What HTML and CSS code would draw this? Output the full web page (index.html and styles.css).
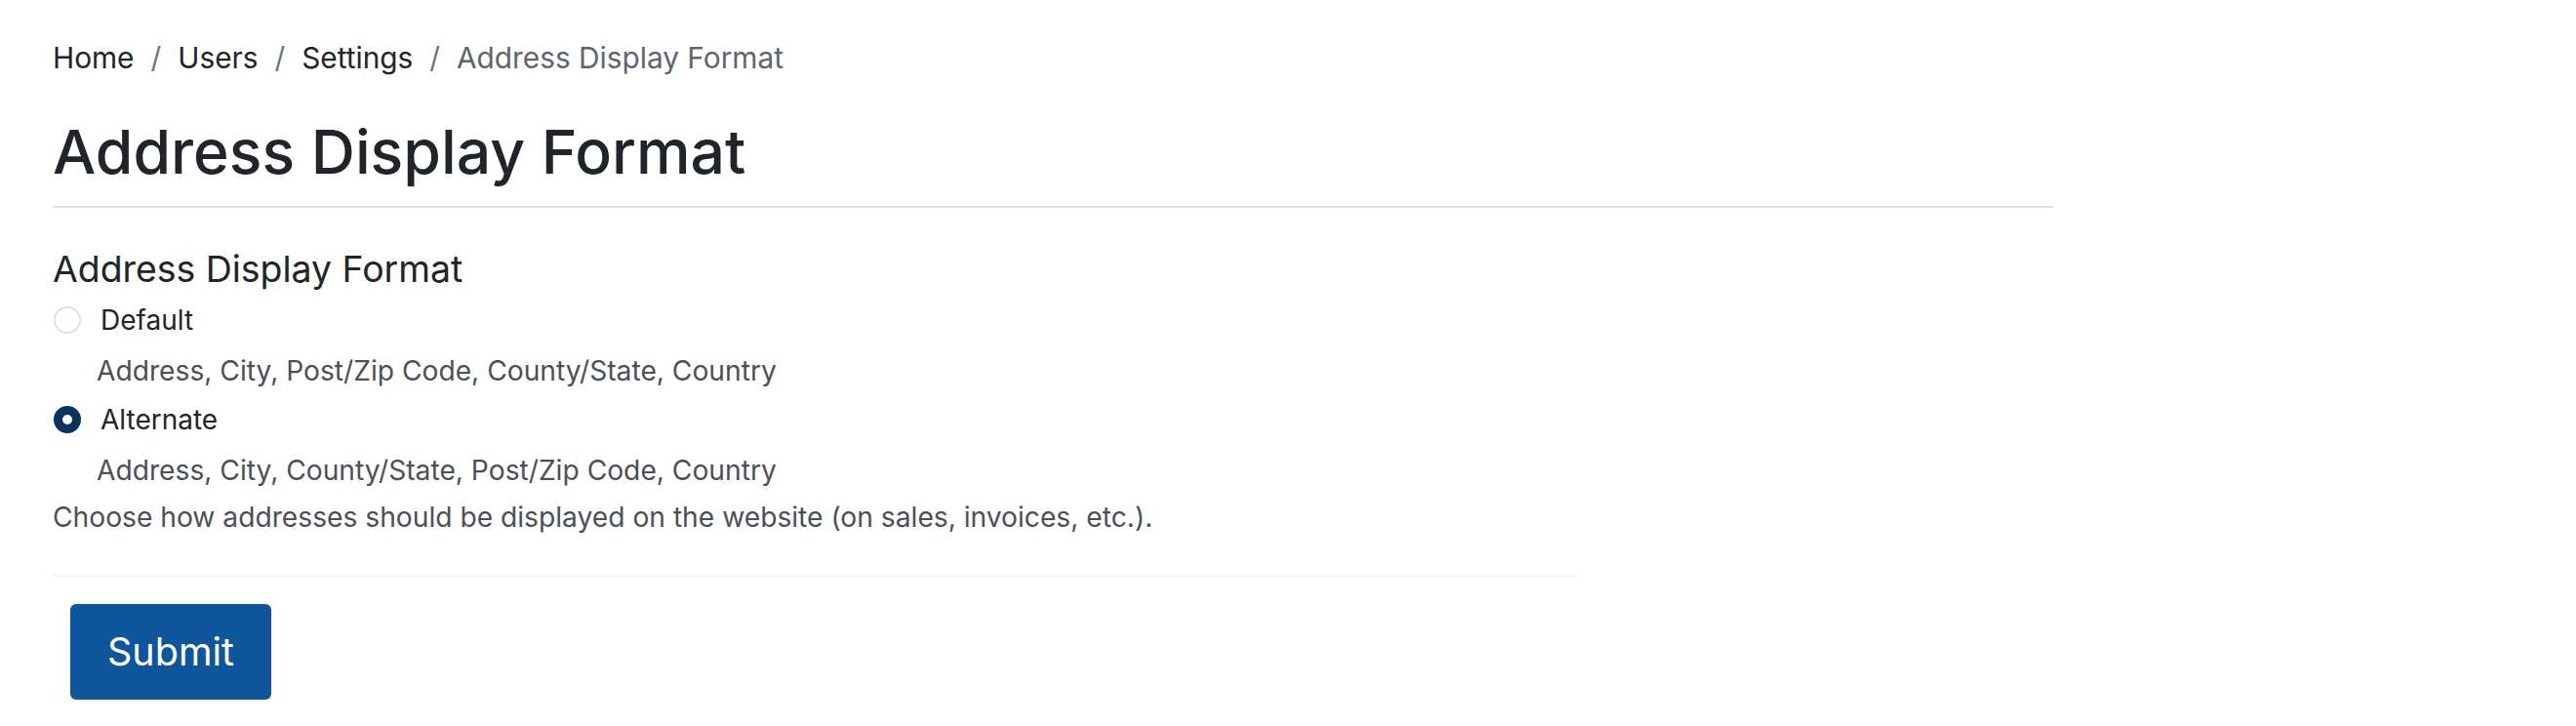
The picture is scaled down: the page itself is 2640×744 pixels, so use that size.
FILE: index.html
```html
<!DOCTYPE html>
<html lang="en">
<head>
<meta charset="utf-8">
<title>Address Display Format</title>
<link rel="stylesheet" href="styles.css">
</head>
<body>
<main class="page">
  <nav class="breadcrumb">
    <a class="crumb" href="#">Home</a><span class="sep">/</span>
    <a class="crumb" href="#">Users</a><span class="sep">/</span>
    <a class="crumb" href="#">Settings</a><span class="sep">/</span>
    <span class="crumb current">Address Display Format</span>
  </nav>
  <h1 class="title">Address Display Format</h1>
  <form class="form">
    <fieldset class="field">
      <legend class="field-label">Address Display Format</legend>
      <label class="option">
        <input class="radio" type="radio" name="fmt" value="default">
        <span class="option-text">Default</span>
      </label>
      <div class="option-desc">Address, City, Post/Zip Code, County/State, Country</div>
      <label class="option">
        <input class="radio" type="radio" name="fmt" value="alternate" checked>
        <span class="option-text">Alternate</span>
      </label>
      <div class="option-desc last">Address, City, County/State, Post/Zip Code, Country</div>
      <div class="help">Choose how addresses should be displayed on the website (on sales, invoices, etc.).</div>
    </fieldset>
    <div class="actions">
      <button class="btn" type="button">Submit</button>
    </div>
  </form>
</main>
</body>
</html>
```
FILE: styles.css
```css
html, body {
  margin: 0;
  padding: 0;
  background: #ffffff;
}
body {
  font-family: Inter, "Noto Sans", "Liberation Sans", sans-serif;
  color: #212529;
}
.page {
  width: 2050px;
  padding: 37px 54px 0 54px;
}
.breadcrumb {
  display: flex;
  align-items: center;
  font-size: 29.8px;
  line-height: 44px;
}
.crumb {
  color: #212529;
  text-decoration: none;
}
.crumb.current {
  color: #5f656d;
}
.sep {
  color: #6c757d;
  padding: 0 17px;
}
.title {
  margin: 36px 0 0 0;
  font-size: 62.5px;
  font-weight: 500;
  line-height: 77px;
  padding-bottom: 17px;
  border-bottom: 2px solid #dee2e6;
}
.form {
  width: 1563px;
}
.field {
  margin: 36px 0 0 0;
  padding: 0;
  border: 0;
}
.field-label {
  padding: 0;
  font-size: 37.4px;
  line-height: 54px;
  margin-bottom: 4px;
}
.option {
  display: flex;
  align-items: center;
  gap: 20px;
  font-size: 28px;
  line-height: 42px;
  color: #212529;
}
.radio {
  appearance: none;
  -webkit-appearance: none;
  margin: 0 0 0 1px;
  width: 28px;
  height: 28px;
  border-radius: 50%;
  border: 2px solid #dee2e6;
  background: #ffffff;
  box-sizing: border-box;
}
.radio:checked {
  border: 9px solid #0b3260;
  background: #ffffff;
}
.option-desc {
  margin: 12px 0 9px 45px;
  font-size: 28.2px;
  line-height: 39px;
  color: #4b5058;
}
.option-desc.last {
  margin-bottom: 9px;
}
.help {
  font-size: 28.2px;
  line-height: 39px;
  color: #4b5058;
  padding-bottom: 39px;
  border-bottom: 2px solid #f3f4f6;
}
.actions {
  padding: 28px 0 0 18px;
}
.btn {
  width: 206px;
  height: 98px;
  border: 0;
  border-radius: 6px;
  background: #0d569b;
  color: #ffffff;
  font-family: Inter, "Noto Sans", "Liberation Sans", sans-serif;
  font-size: 39.5px;
}
```
